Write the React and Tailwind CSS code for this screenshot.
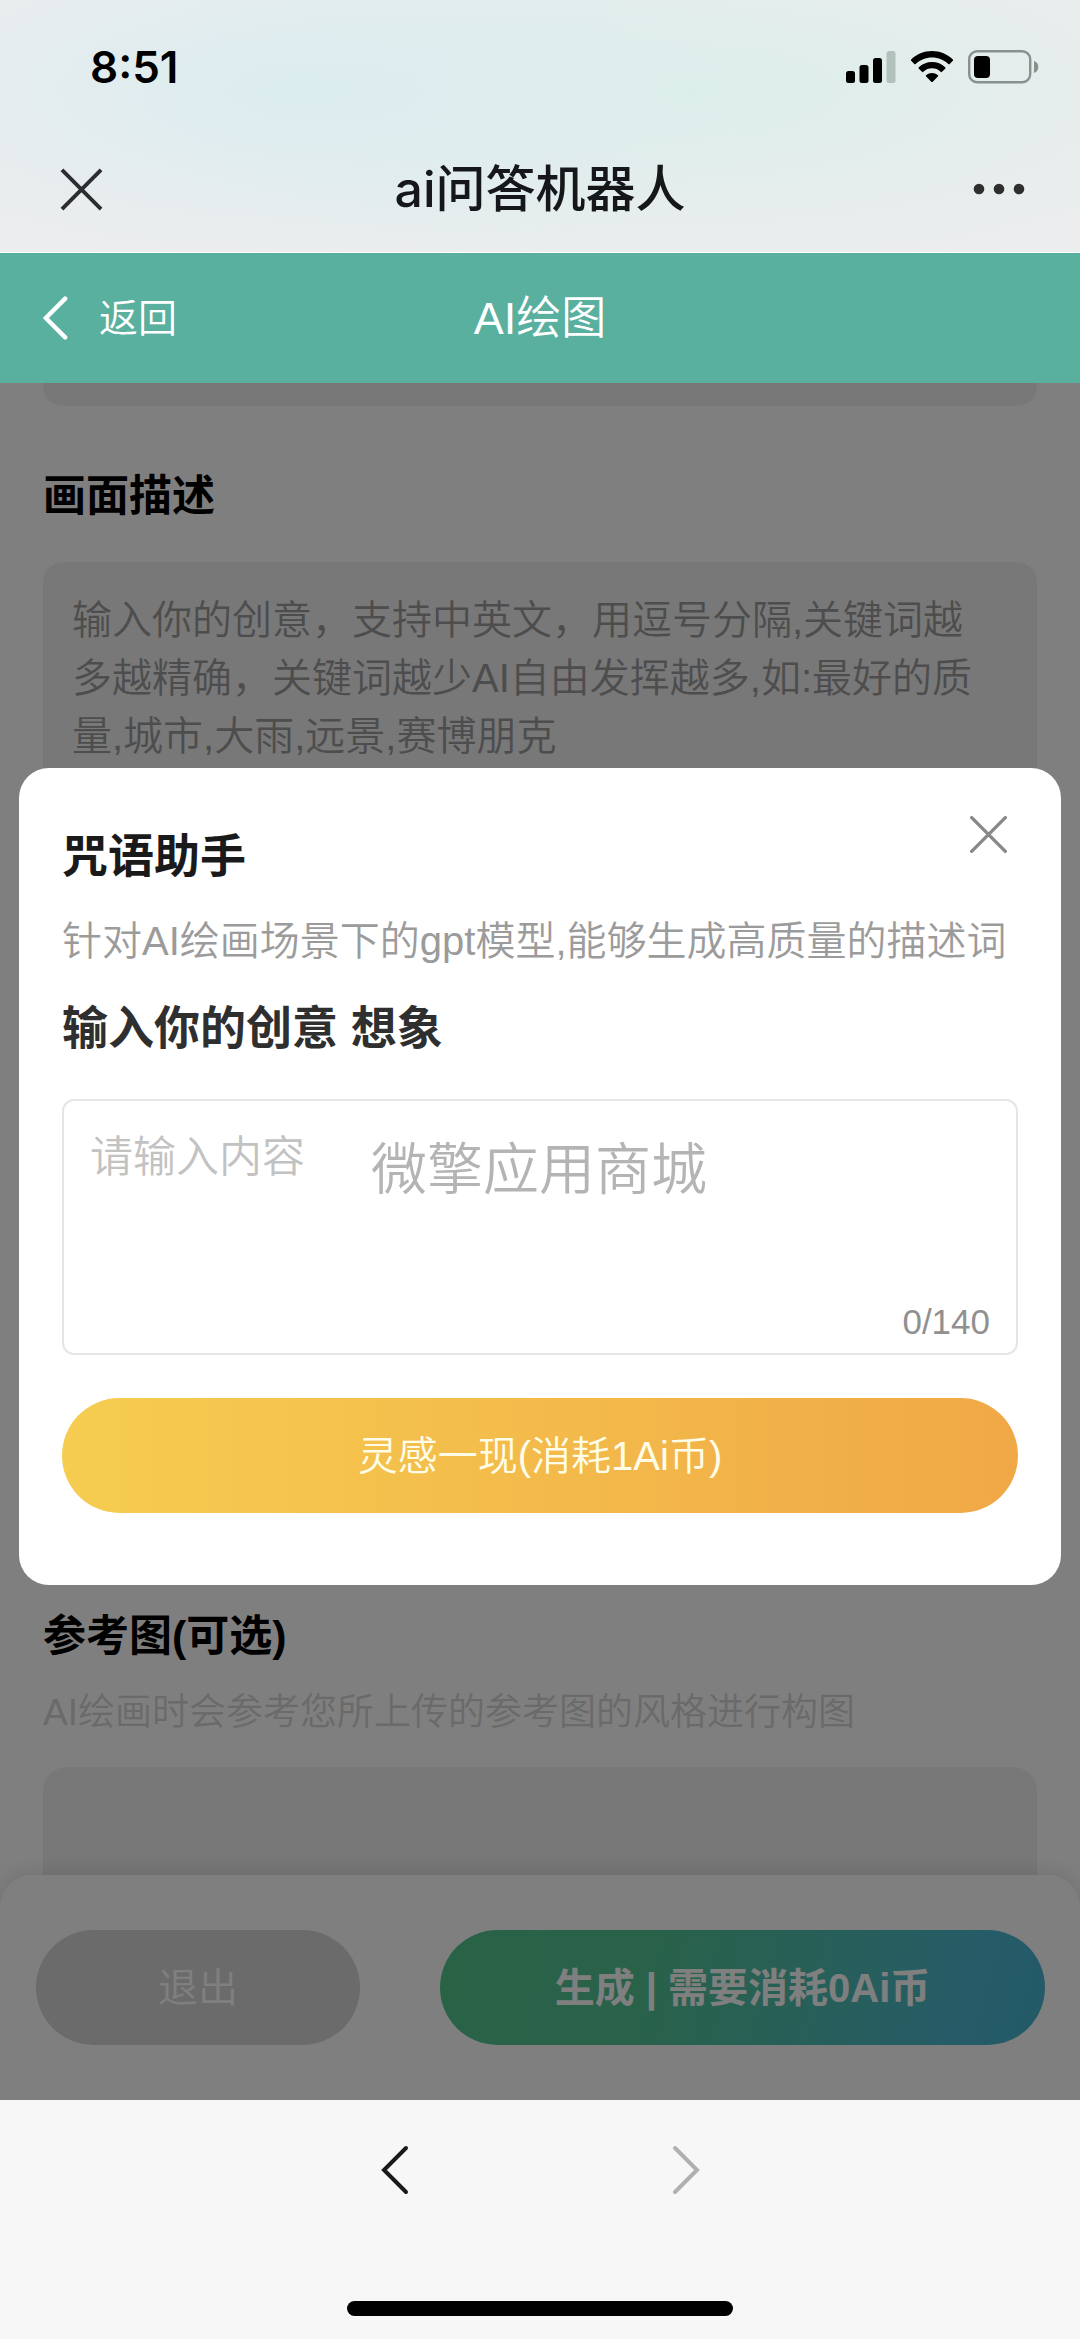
import React, { useState } from 'react'

const sans = "font-['Liberation_Sans','Noto_Sans_CJK_SC',sans-serif]"
const system = "font-['Inter','Noto_Sans_CJK_SC',sans-serif]"

function CloseIcon({ className, strokeWidth = 4, cap = 'butt' }) {
  return (
    <svg className={className} viewBox="0 0 44 44" fill="none" aria-hidden="true">
      <path d="M2 2 42 42M42 2 2 42" stroke="currentColor" strokeWidth={strokeWidth} strokeLinecap={cap} />
    </svg>
  )
}

function Chevron({ className, right, strokeWidth = 5 }) {
  return (
    <svg className={className} viewBox="0 0 28 50" fill="none" aria-hidden="true">
      <path
        d={right ? 'M3 3 25 25 3 47' : 'M25 3 3 25 25 47'}
        stroke="currentColor"
        strokeWidth={strokeWidth}
        strokeLinecap="round"
      />
    </svg>
  )
}

function StatusIcons() {
  return (
    <div className="flex items-center gap-[14px]">
      <svg className="h-[32px] w-[50px]" viewBox="0 0 50 32" aria-hidden="true">
        <rect x="0" y="20" width="9" height="12" rx="2.5" />
        <rect x="13.5" y="14" width="9" height="18" rx="2.5" />
        <rect x="27" y="7" width="9" height="25" rx="2.5" />
        <rect x="40.5" y="0" width="9" height="32" rx="2.5" fill="#b3c1bc" />
      </svg>
      <svg className="h-[32px] w-[44px]" viewBox="0 0 44 33" aria-hidden="true">
        <path d="M22 0C13.600 0 6 3.300.5 8.700a1 1 0 0 0 0 1.400L3.800 13.400a1 1 0 0 0 1.400 0C9.600 9.200 15.500 6.700 22 6.700s12.400 2.500 16.800 6.700a1 1 0 0 0 1.400 0l3.300-3.300a1 1 0 0 0 0-1.400C38 3.300 30.400 0 22 0Z" />
        <path d="M22 11.300c-5.300 0-10.100 2.100-13.600 5.500a1 1 0 0 0 0 1.400l3.300 3.300a1 1 0 0 0 1.400 0 12.800 12.800 0 0 1 17.800 0 1 1 0 0 0 1.400 0l3.300-3.300a1 1 0 0 0 0-1.400 19.500 19.500 0 0 0-13.600-5.500Z" />
        <path d="M22 22.700c-2.300 0-4.300.800-5.900 2.100a1 1 0 0 0-.1 1.500l5.200 5.300a1.100 1.100 0 0 0 1.600 0l5.200-5.300a1 1 0 0 0-.1-1.500 9.200 9.200 0 0 0-5.900-2.100Z" />
      </svg>
      <svg className="h-[34px] w-[71px]" viewBox="0 0 71 34" aria-hidden="true">
        <rect x="1.200" y="1.200" width="61" height="31" rx="8" fill="none" stroke="#87918e" strokeWidth="2.400" />
        <rect x="6" y="6" width="16" height="22" rx="4" />
        <path d="M66 11c3 1 4.300 3.300 4.300 6S69 22 66 23Z" fill="#87918e" />
      </svg>
    </div>
  )
}

function BrowserHeader() {
  return (
    <header
      className={`${system} border-b border-white bg-[#ecedee] bg-[radial-gradient(ellipse_46%_70%_at_28%_36%,#dbecef,transparent),radial-gradient(ellipse_54%_74%_at_64%_36%,#dceeea,transparent)]`}
    >
      <div className="flex h-[126px] items-center justify-between pt-[7px] pr-[41px] pl-[90px]">
        <span className="text-[44px] leading-none font-semibold text-black">8:51</span>
        <StatusIcons />
      </div>
      <div className="grid h-[126px] grid-cols-[1fr_auto_1fr] items-center px-[55px]">
        <button type="button" aria-label="关闭" className="w-max pl-[5px] text-[#2b2d30]">
          <CloseIcon className="size-[43px]" />
        </button>
        <h1 className="text-[50px] leading-none font-medium text-[#15171a]">ai问答机器人</h1>
        <button type="button" aria-label="更多" className="w-max justify-self-end text-[#2f2f2f]">
          <svg className="h-[12px] w-[52px]" viewBox="0 0 52 12" fill="currentColor" aria-hidden="true">
            <circle cx="6" cy="6" r="5.300" />
            <circle cx="26" cy="6" r="5.300" />
            <circle cx="46" cy="6" r="5.300" />
          </svg>
        </button>
      </div>
    </header>
  )
}

function NavBar() {
  return (
    <nav className="grid h-[130px] grid-cols-[1fr_auto_1fr] items-center bg-[#59b09f] px-[43px] text-white">
      <a href="#back" className="flex w-max items-center gap-[31px] text-[39px] leading-none">
        <Chevron className="h-[44px] w-[25px]" />
        返回
      </a>
      <h2 className="text-[45px] leading-none">AI绘图</h2>
    </nav>
  )
}

function DrawForm() {
  return (
    <form onSubmit={(e) => e.preventDefault()}>
      <div className="px-[43px]">
        <div className="h-[23px] rounded-b-[20px] bg-[#f0f0f0]" />
        <label htmlFor="prompt" className="mt-[60px] block text-[43px] leading-[60px] font-bold text-black">
          画面描述
        </label>
        <textarea
          id="prompt"
          className="mt-[36px] block h-[420px] w-full resize-none rounded-[20px] bg-[#f0f0f0] py-[29px] pr-[50px] pl-[29px] text-[40px] leading-[58px] outline-none placeholder:text-[#9b9b9b] placeholder:opacity-100"
          placeholder="输入你的创意，支持中英文，用逗号分隔,关键词越多越精确，关键词越少AI自由发挥越多,如:最好的质量,城市,大雨,远景,赛博朋克"
        />
        <h3 className="mt-[624px] text-[43px] leading-[60px] font-bold text-black">参考图(可选)</h3>
        <p className="mt-[19px] text-[37px] leading-[56px] text-[#d4d4d4]">
          AI绘画时会参考您所上传的参考图的风格进行构图
        </p>
        <div className="mt-[26px] h-[108px] rounded-t-[24px] bg-[#f0f0f0]" />
      </div>
      <div className="grid grid-cols-[324fr_605fr] gap-[80px] rounded-t-[32px] bg-white py-[55px] pr-[35px] pl-[36px] text-[40px] text-white shadow-[0_0_24px_rgba(0,0,0,0.14)]">
        <button type="button" className="h-[115px] rounded-full bg-[#d6d6d6]">
          退出
        </button>
        <button
          type="submit"
          className="h-[115px] rounded-full bg-[linear-gradient(105deg,#52c68c,#52c494_35%,#4cb9ce_85%,#48b4d2)] font-bold"
        >
          生成 | 需要消耗0Ai币
        </button>
      </div>
    </form>
  )
}

function SpellDialog() {
  const [text, setText] = useState('')
  return (
    <div
      role="dialog"
      aria-labelledby="spell-title"
      className="mx-[19px] h-max w-full rounded-[30px] bg-white px-[43px] pt-[48px] pb-[72px]"
    >
      <div className="flex items-start justify-between">
        <h2 id="spell-title" className="pt-[8px] text-[46px] leading-[64px] font-bold text-[#1a1a1a]">
          咒语助手
        </h2>
        <button type="button" aria-label="关闭" className="mr-[11px] text-[#888]">
          <CloseIcon className="size-[37px]" cap="round" />
        </button>
      </div>
      <p className="mt-[23px] text-[40px] leading-[60px] whitespace-nowrap text-[#9b9b9b]">
        针对AI绘画场景下的gpt模型,能够生成高质量的描述词
      </p>
      <label htmlFor="idea" className="mt-[25px] block text-[46px] leading-[64px] font-bold text-[#2f2f2f]">
        输入你的创意 想象
      </label>
      <div className="relative mt-[39px] rounded-[12px] border-2 border-[#e6e6e6] pb-[7px]">
        <textarea
          id="idea"
          maxLength={140}
          value={text}
          onChange={(e) => setText(e.target.value)}
          className="block h-[197px] w-full resize-none px-[26px] pt-[24px] text-[43px] leading-[64px] outline-none placeholder:text-[#c2c2c2] placeholder:opacity-100"
          placeholder="请输入内容"
        />
        <span className="pointer-events-none absolute top-[29px] left-[307px] text-[56px] leading-[80px] text-[#b4b4b4]">
          微擎应用商城
        </span>
        <p className="pr-[26px] text-right text-[35px] leading-[48px] text-[#909090]">{text.length}/140</p>
      </div>
      <button
        type="button"
        className="mt-[43px] h-[115px] w-full rounded-full bg-linear-to-r from-[#f6cd50] to-[#f0a846] text-[40px] text-[#fffde8]"
      >
        灵感一现(消耗1Ai币)
      </button>
    </div>
  )
}

function BrowserFooter() {
  return (
    <footer className="flex flex-col items-center bg-[#f7f7f7] pt-[45px] pb-[23px]">
      <div className="flex gap-[263px]">
        <button type="button" aria-label="后退" className="text-[#1a1a1a]">
          <Chevron className="h-[50px] w-[28px]" strokeWidth={4} />
        </button>
        <button type="button" aria-label="前进" className="text-[#b0b0b0]">
          <Chevron className="h-[50px] w-[28px]" strokeWidth={4} right />
        </button>
      </div>
      <div className="mt-[106px] h-[15px] w-[386px] rounded-full bg-black" />
    </footer>
  )
}

export default function App() {
  return (
    <div className={`${sans} min-h-screen bg-[#f7f7f7] font-[350]`}>
      <BrowserHeader />
      <NavBar />
      <main className="relative overflow-hidden bg-white">
        <DrawForm />
        <div className="absolute inset-0 flex bg-black/50 pt-[385px]">
          <SpellDialog />
        </div>
      </main>
      <BrowserFooter />
    </div>
  )
}
